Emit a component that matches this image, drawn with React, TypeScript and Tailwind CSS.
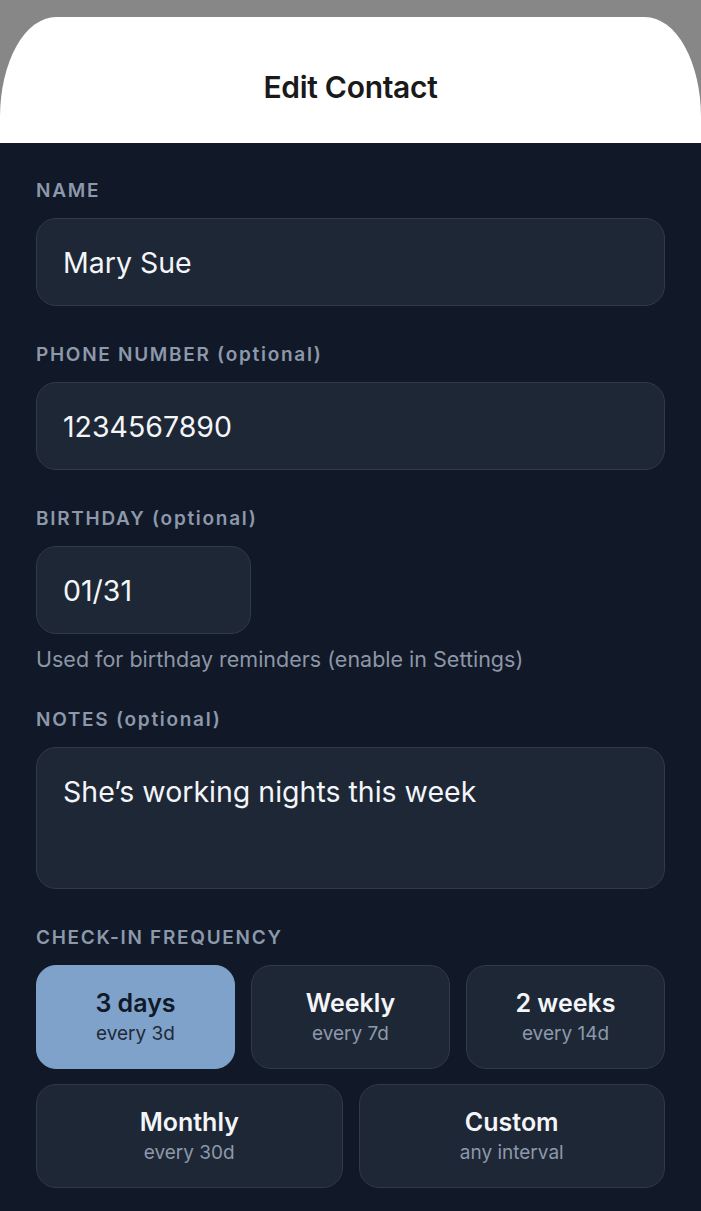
import React, { useState } from 'react';

const FREQS = [
  { key: '3d', title: '3 days', sub: 'every 3d' },
  { key: '7d', title: 'Weekly', sub: 'every 7d' },
  { key: '14d', title: '2 weeks', sub: 'every 14d' },
  { key: '30d', title: 'Monthly', sub: 'every 30d' },
  { key: 'custom', title: 'Custom', sub: 'any interval' },
];

const Label = ({ children }: { children: React.ReactNode }) => (
  <div className="text-[19px] leading-[24px] font-semibold tracking-[0.09em] text-[#8c99ab] mb-[15px]">{children}</div>
);

const inputCls =
  'bg-[#1e2735] border-[1.5px] border-[#2f3a4b] rounded-[20px] px-[26px] text-[28.5px] text-[#f3f5f8] outline-none';

const FreqButton = ({
  item,
  active,
  onClick,
}: {
  item: (typeof FREQS)[number];
  active: boolean;
  onClick: () => void;
}) => (
  <button
    onClick={onClick}
    className={`h-[104px] rounded-[20px] flex flex-col items-center justify-center border-[1.5px] ${
      active ? 'bg-[#7fa2cb] border-[#7fa2cb]' : 'bg-[#1e2735] border-[#2f3a4b]'
    }`}
  >
    <span className={`text-[25px] leading-[30px] font-semibold ${active ? 'text-[#111827]' : 'text-[#f3f5f8]'}`}>
      {item.title}
    </span>
    <span className={`mt-[3px] text-[19px] leading-[26px] ${active ? 'text-[#1f2937]' : 'text-[#8c99ab]'}`}>
      {item.sub}
    </span>
  </button>
);

export default function App() {
  const [name, setName] = useState('Mary Sue');
  const [phone, setPhone] = useState('1234567890');
  const [birthday, setBirthday] = useState('01/31');
  const [notes, setNotes] = useState('She\u2019s working nights this week');
  const [freq, setFreq] = useState('3d');

  return (
    <div className="min-h-screen bg-[#111827] font-['Inter','Noto_Sans',sans-serif]">
      <div className="bg-[#878787] pt-[17px]">
        <div className="bg-white h-[126px] pt-[14px] rounded-tl-[56px_100px] rounded-tr-[56px_100px] flex items-center justify-center">
          <h1 className="text-[30px] font-semibold text-[#1a1a1a] tracking-[-0.01em]">Edit Contact</h1>
        </div>
      </div>

      <div className="px-[36px] pt-[36px] pb-[24px]">
        <Label>NAME</Label>
        <input value={name} onChange={e => setName(e.target.value)} className={`${inputCls} w-full h-[88px]`} />

        <div className="mt-[37px]">
          <Label>PHONE NUMBER (optional)</Label>
          <input value={phone} onChange={e => setPhone(e.target.value)} className={`${inputCls} w-full h-[88px]`} />
        </div>

        <div className="mt-[37px]">
          <Label>BIRTHDAY (optional)</Label>
          <input
            value={birthday}
            onChange={e => setBirthday(e.target.value)}
            className={`${inputCls} w-[215px] h-[88px]`}
          />
          <p className="mt-[11px] text-[21.5px] leading-[28px] text-[#8c96a6]">
            Used for birthday reminders (enable in Settings)
          </p>
        </div>

        <div className="mt-[35px]">
          <Label>NOTES (optional)</Label>
          <textarea
            value={notes}
            onChange={e => setNotes(e.target.value)}
            className={`${inputCls} w-full h-[142px] pt-[24px] leading-[40px] resize-none block`}
          />
        </div>

        <div className="mt-[37px]">
          <Label>CHECK-IN FREQUENCY</Label>
          <div className="grid grid-cols-3 gap-[16px]">
            {FREQS.slice(0, 3).map(f => (
              <FreqButton key={f.key} item={f} active={freq === f.key} onClick={() => setFreq(f.key)} />
            ))}
          </div>
          <div className="grid grid-cols-2 gap-[16px] mt-[15px]">
            {FREQS.slice(3).map(f => (
              <FreqButton key={f.key} item={f} active={freq === f.key} onClick={() => setFreq(f.key)} />
            ))}
          </div>
        </div>
      </div>
    </div>
  );
}
